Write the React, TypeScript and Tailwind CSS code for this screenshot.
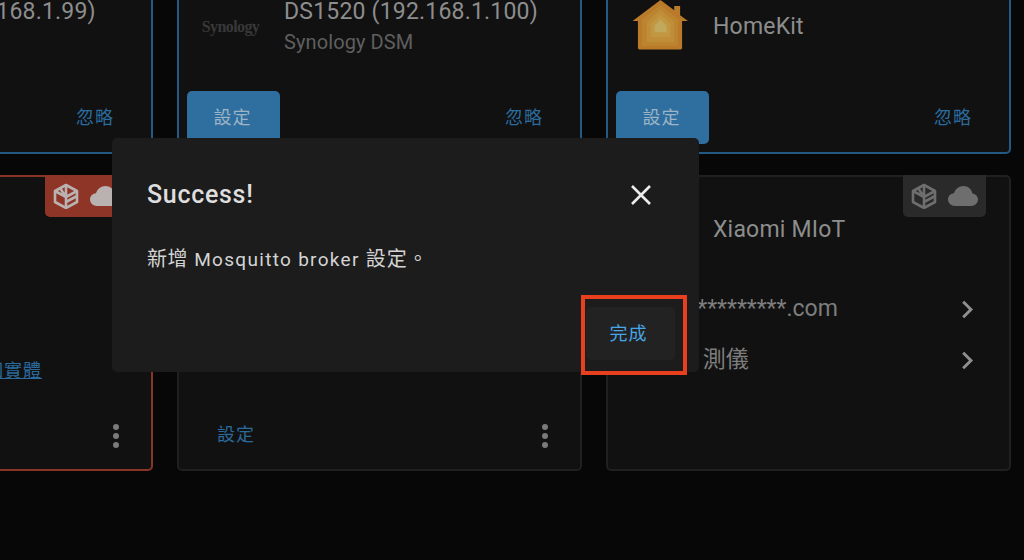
import React from "react";

const font = { fontFamily: '"Roboto","Noto Sans CJK TC",sans-serif' };

function Cube({ className }: { className: string }) {
  return (
    <svg viewBox="0 0 26 26" className={className} fill="none" stroke="currentColor" strokeWidth="2.6" strokeLinejoin="round">
      <path d="M13 2 L24 8 V19 L13 25 L2 19 V8 Z" />
      <path d="M2 8 L13 14 L24 8 M13 14 V25 M7 5 L13 14 M13 14 L13 2 M13 19 L24 13" />
    </svg>
  );
}

function Cloud({ className }: { className: string }) {
  return (
    <svg viewBox="0 0 30 20" className={className} fill="currentColor">
      <path d="M7 20 C3 20 0 17 0 13.5 C0 10 2.6 7.5 6 7.2 C7.4 3 11 0 15.4 0 C20 0 23.6 3.2 24.4 7.4 C27.6 7.9 30 10.4 30 13.6 C30 17.2 27 20 23.4 20 Z" />
    </svg>
  );
}

function Dots() {
  return (
    <div className="flex flex-col gap-[3px]">
      <span className="block h-[6px] w-[6px] rounded-full bg-[#7a7a7a]" />
      <span className="block h-[6px] w-[6px] rounded-full bg-[#7a7a7a]" />
      <span className="block h-[6px] w-[6px] rounded-full bg-[#7a7a7a]" />
    </div>
  );
}

function Chevron() {
  return (
    <svg viewBox="0 0 14 22" className="h-[19px] w-[13px]" fill="none" stroke="#8f8f8f" strokeWidth="3.4">
      <path d="M2 2 L11 11 L2 20" />
    </svg>
  );
}

function Home() {
  return (
    <svg viewBox="0 0 58 52" className="mb-[2px] mr-[1px] h-[51px] w-[57px]">
      <path d="M29 0 L43 10.500 V6 H49 V15.500 L57 21.500 H51 V49 Q51 50.500 49.500 50.500 H7.500 Q6 50.500 6 49 V21.500 H0.500 Z" fill="#b97a2a" />
      <path d="M29 5 L47 20 V47 H10 V20 Z" fill="#bd8430" />
      <path d="M29 10 L43 22 V43 H15 V22 Z" fill="#c08d38" />
      <path d="M29 15 L39 24 V38 H19 V24 Z" fill="#c29742" />
      <path d="M29 20 L35 26 V33 H23 V26 Z" fill="#c2a85c" />
    </svg>
  );
}

function Row1Card({ title, sub, icon, button }: { title: string; sub?: string; icon?: React.ReactNode; button?: boolean }) {
  return (
    <div className="flex h-[254px] w-[405px] flex-col justify-between rounded-[5px] border-2 border-[#235a85] bg-[#111111]">
      <div className="flex h-[151px] items-center pt-[98px]">
        <div className="flex h-[60px] w-[105px] shrink-0 items-center justify-center">{icon}</div>
        <div className="min-w-0 whitespace-nowrap">
          <div className="text-[23px] leading-[31px] tracking-[0.2px] text-[#8d8d8d]">{title}</div>
          {sub && <div className="text-[20px] leading-[31px] tracking-[0.1px] text-[#5f5f5f]">{sub}</div>}
        </div>
      </div>
      <div className="mb-[8px] flex h-[53px] items-center justify-between pl-[8px] pr-[37px]">
        {button ? (
          <div className="flex h-[53px] w-[93px] items-center justify-center rounded-[5px] bg-[#2f6f9f] pr-[2px] text-[18px] tracking-[1px] text-[#9db4c6]">設定</div>
        ) : (
          <div />
        )}
        <div className="text-[18px] tracking-[1px] text-[#2a6a9c]">忽略</div>
      </div>
    </div>
  );
}

export default function App() {
  return (
    <div className="relative h-[560px] w-[1024px] overflow-hidden bg-[#070707]" style={font}>
      <div className="ml-[-252px] mt-[-100px] grid w-[1263px] grid-cols-[405px_405px_405px] gap-x-[24px] gap-y-[21px]">
        <Row1Card title="DS1520 (192.168.1.99)" sub="Synology DSM" />
        <Row1Card
          title="DS1520 (192.168.1.100)"
          sub="Synology DSM"
          icon={<span className="mr-[2px] text-[16px] font-bold tracking-[-0.6px] text-[#383838]" style={{ fontFamily: '"Liberation Serif",serif' }}>Synology</span>}
          button
        />
        <Row1Card title="HomeKit" icon={<Home />} button />

        <div className="relative flex h-[296px] flex-col justify-end rounded-[5px] border-2 border-[#8a3426] bg-[#111111]">
          <div className="absolute right-[23px] top-[-2px] flex h-[42px] w-[83px] items-center gap-[11px] rounded-b-[5px] bg-[#8f3527] pl-[8px] text-[#b9b2b0]">
            <Cube className="h-[26px] w-[26px]" />
            <Cloud className="h-[20px] w-[30px]" />
          </div>
          <div className="mb-[40px] flex justify-end pr-[109px] text-[18px] tracking-[1px] text-[#2a6a9c] underline">1 個實體</div>
          <div className="flex justify-end pb-[21px] pr-[32px]"><Dots /></div>
        </div>

        <div className="flex h-[296px] items-end justify-between rounded-[5px] border-2 border-[#202020] bg-[#111111] pb-[21px] pl-[38px] pr-[32px]">
          <div className="text-[18px] leading-[26px] tracking-[1px] text-[#2a6a9c]">設定</div>
          <Dots />
        </div>

        <div className="relative h-[296px] rounded-[5px] border-2 border-[#202020] bg-[#111111]">
          <div className="absolute right-[23px] top-[-2px] flex h-[42px] w-[83px] items-center gap-[11px] rounded-b-[5px] bg-[#2a2a2a] pl-[8px] text-[#6e6e6e]">
            <Cube className="h-[26px] w-[26px]" />
            <Cloud className="h-[20px] w-[30px]" />
          </div>
          <div className="flex h-[107px] items-end pb-[39px] pl-[105px] text-[23px] leading-[30px] tracking-[0.2px] text-[#8d8d8d]">Xiaomi MIoT</div>
          <div className="flex h-[51px] items-center justify-between pr-[35px]">
            <span className="whitespace-nowrap pl-[6px] text-[23px] text-[#7d7d7d]">abcdefg*********.com</span>
            <Chevron />
          </div>
          <div className="flex h-[51px] items-center justify-between pr-[35px]">
            <span className="whitespace-nowrap pl-[43px] text-[23px] text-[#7d7d7d]">濕度 測儀</span>
            <Chevron />
          </div>
        </div>
      </div>

      <div className="absolute left-[112px] top-[138px] flex h-[234px] w-[587px] flex-col rounded-[5px] bg-[#1c1c1c]">
        <div className="flex h-[96px] items-center justify-between pl-[35px] pr-[46px] pt-[17px]">
          <div className="text-[25px] font-medium tracking-[0.7px] text-[#dedede]">Success!</div>
          <svg viewBox="0 0 24 24" className="h-[24px] w-[24px]" fill="none" stroke="#ececec" strokeWidth="2.600"><path d="M3 3 L21 21 M21 3 L3 21" /></svg>
        </div>
        <div className="pl-[35px] pt-[10px] text-[19px] leading-[30px] tracking-[1.3px] text-[#d4d4d4]">
          <span className="text-[20px] tracking-[0.6px]">新增</span> Mosquitto broker <span className="text-[20px] tracking-[1px]">設定。</span>
        </div>
        <div className="mt-auto flex justify-end pb-[12px] pr-[24px]">
          <div className="flex h-[53px] w-[89px] items-center justify-center rounded-[5px] bg-[#222222] pr-[4px] text-[18px] tracking-[1px] text-[#48a5e6]">完成</div>
        </div>
      </div>

      <div className="absolute left-[581px] top-[295px] h-[80px] w-[106px] border-[4px] border-[#e8401f]" />
    </div>
  );
}
